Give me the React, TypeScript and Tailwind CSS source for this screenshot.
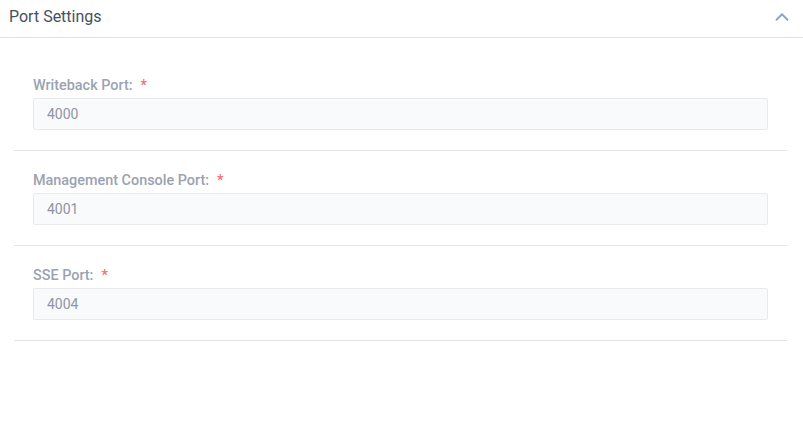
import { ChevronUp } from 'lucide-react';

interface PortField {
  label: string;
  value: string;
}

const fields: PortField[] = [
  { label: 'Writeback Port:', value: '4000' },
  { label: 'Management Console Port:', value: '4001' },
  { label: 'SSE Port:', value: '4004' },
];

const PortRow = ({ label, value }: PortField) => (
  <div className="px-[19px] pt-5 pb-5 border-b border-[#e3e4e7]">
    <label className="flex items-center h-5 text-[14.4px] font-medium text-[#9aa2b3]">
      {label}
      <span className="ml-[8px] text-[#f56c6c]">*</span>
    </label>
    <input
      readOnly
      value={value}
      className="mt-[2px] block w-full h-8 px-[13px] text-[14px] text-[#8e95a4] bg-[#f9fafb] border border-[#e9eaed] rounded-[2px] outline-none"
    />
  </div>
);

export default function App() {
  return (
    <div className="w-[803px] h-[437px] bg-white font-['Roboto',sans-serif]">
      <div className="h-[38px] flex items-start justify-between pl-[9px] pr-[10px] pt-[5px] border-b border-[#e0e1e4]">
        <h2 className="text-[16px] leading-6 text-[#46505f]">Port Settings</h2>
        <ChevronUp size={22} strokeWidth={2} className="text-[#8fa2bd] mt-[1px]" />
      </div>
      <div className="ml-[14px] mr-[16px] pt-[18px]">
        {fields.map(f => (
          <PortRow key={f.label} {...f} />
        ))}
      </div>
    </div>
  );
}
